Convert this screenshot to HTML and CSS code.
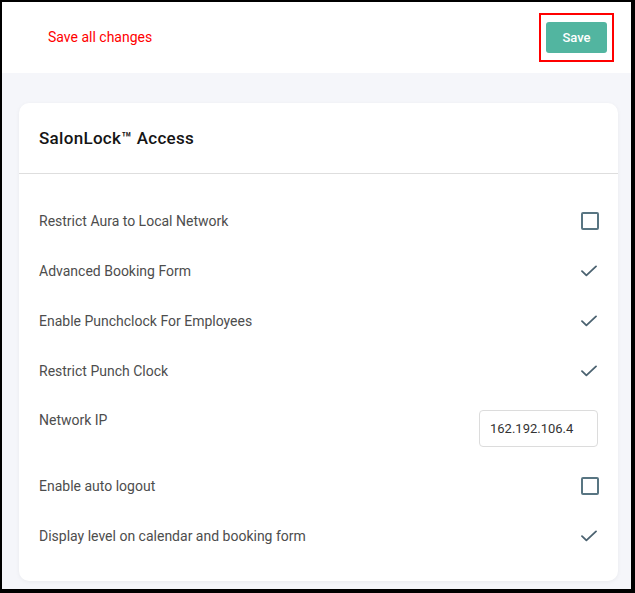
FILE: index.html
```html
<!DOCTYPE html>
<html lang="en">
<head>
    <meta charset="UTF-8">
    <meta name="viewport" content="width=device-width, initial-scale=1.0">
    <title>SalonLock Access</title>
    <link rel="stylesheet" href="styles.css">
</head>
<body>
    <div class="frame">
        <header class="topbar">
            <span class="unsaved">Save all changes</span>
            <div class="save-outline">
                <button class="save-btn">Save</button>
            </div>
        </header>
        <main class="content">
            <section class="card">
                <div class="card-title">SalonLock™ Access</div>
                <div class="card-body">
                    <div class="row">
                        <span class="label">Restrict Aura to Local Network</span>
                        <span class="checkbox"></span>
                    </div>
                    <div class="row">
                        <span class="label">Advanced Booking Form</span>
                        <svg class="check" viewBox="0 0 16 12"><path d="M1 6.2 L5.4 10.4 L15 1.4" /></svg>
                    </div>
                    <div class="row">
                        <span class="label">Enable Punchclock For Employees</span>
                        <svg class="check" viewBox="0 0 16 12"><path d="M1 6.2 L5.4 10.4 L15 1.4" /></svg>
                    </div>
                    <div class="row">
                        <span class="label">Restrict Punch Clock</span>
                        <svg class="check" viewBox="0 0 16 12"><path d="M1 6.2 L5.4 10.4 L15 1.4" /></svg>
                    </div>
                    <div class="row row-top">
                        <span class="label">Network IP</span>
                        <input type="text" class="ip-input" value="162.192.106.4" />
                    </div>
                    <div class="row">
                        <span class="label">Enable auto logout</span>
                        <span class="checkbox"></span>
                    </div>
                    <div class="row">
                        <span class="label">Display level on calendar and booking form</span>
                        <svg class="check" viewBox="0 0 16 12"><path d="M1 6.2 L5.4 10.4 L15 1.4" /></svg>
                    </div>
                </div>
            </section>
        </main>
    </div>
</body>
</html>
```

FILE: styles.css
```css
* {
    box-sizing: border-box;
}

body {
    margin: 0;
    font-family: Roboto, "Liberation Sans", Arial, sans-serif;
    background-color: #000;
}

.frame {
    height: 593px;
    border-style: solid;
    border-color: #000;
    border-width: 2px 4px 4px 2px;
    background-color: #f5f6fa;
    overflow: hidden;
}

.topbar {
    height: 71px;
    background-color: #fff;
    display: flex;
    justify-content: space-between;
    align-items: center;
    padding: 0 17px 0 46px;
}

.unsaved {
    color: #ff0000;
    font-size: 14px;
    margin-top: -2px;
}

.save-outline {
    border: 2px solid #ff0000;
    padding: 7px 5px;
    margin-top: -1px;
}

.save-btn {
    display: block;
    width: 61px;
    height: 31px;
    border: none;
    border-radius: 3px;
    background-color: #52b5a0;
    color: #fff;
    font-family: inherit;
    font-size: 13px;
    font-weight: 500;
    cursor: pointer;
}

.content {
    padding: 30px 13px 0 17px;
}

.card {
    background-color: #fff;
    border-radius: 10px;
    box-shadow: 0 1px 4px rgba(0, 0, 0, 0.05);
}

.card-title {
    height: 71px;
    display: flex;
    align-items: center;
    padding: 0 20px;
    font-size: 17px;
    font-weight: 500;
    letter-spacing: 0.3px;
    color: #151515;
    border-bottom: 1px solid #dedede;
}

.card-body {
    padding: 22px 19px 20px 20px;
}

.row {
    display: flex;
    justify-content: space-between;
    align-items: center;
    padding: 15px 0;
}

.row-top {
    align-items: flex-start;
    padding: 14px 0;
}

.label {
    font-size: 14px;
    line-height: 20px;
    color: #4d4d4d;
}

.checkbox {
    width: 18px;
    height: 18px;
    border: 2px solid #587582;
    border-radius: 2px;
}

.check {
    width: 16px;
    height: 12px;
    margin-right: 2px;
    fill: none;
    stroke: #4b6270;
    stroke-width: 1.8;
    stroke-linecap: round;
    stroke-linejoin: round;
}

.ip-input {
    width: 119px;
    height: 37px;
    margin-right: 1px;
    padding: 0 10px;
    border: 1px solid #dcdcdc;
    border-radius: 4px;
    font-family: inherit;
    font-size: 13px;
    color: #333;
}
```
